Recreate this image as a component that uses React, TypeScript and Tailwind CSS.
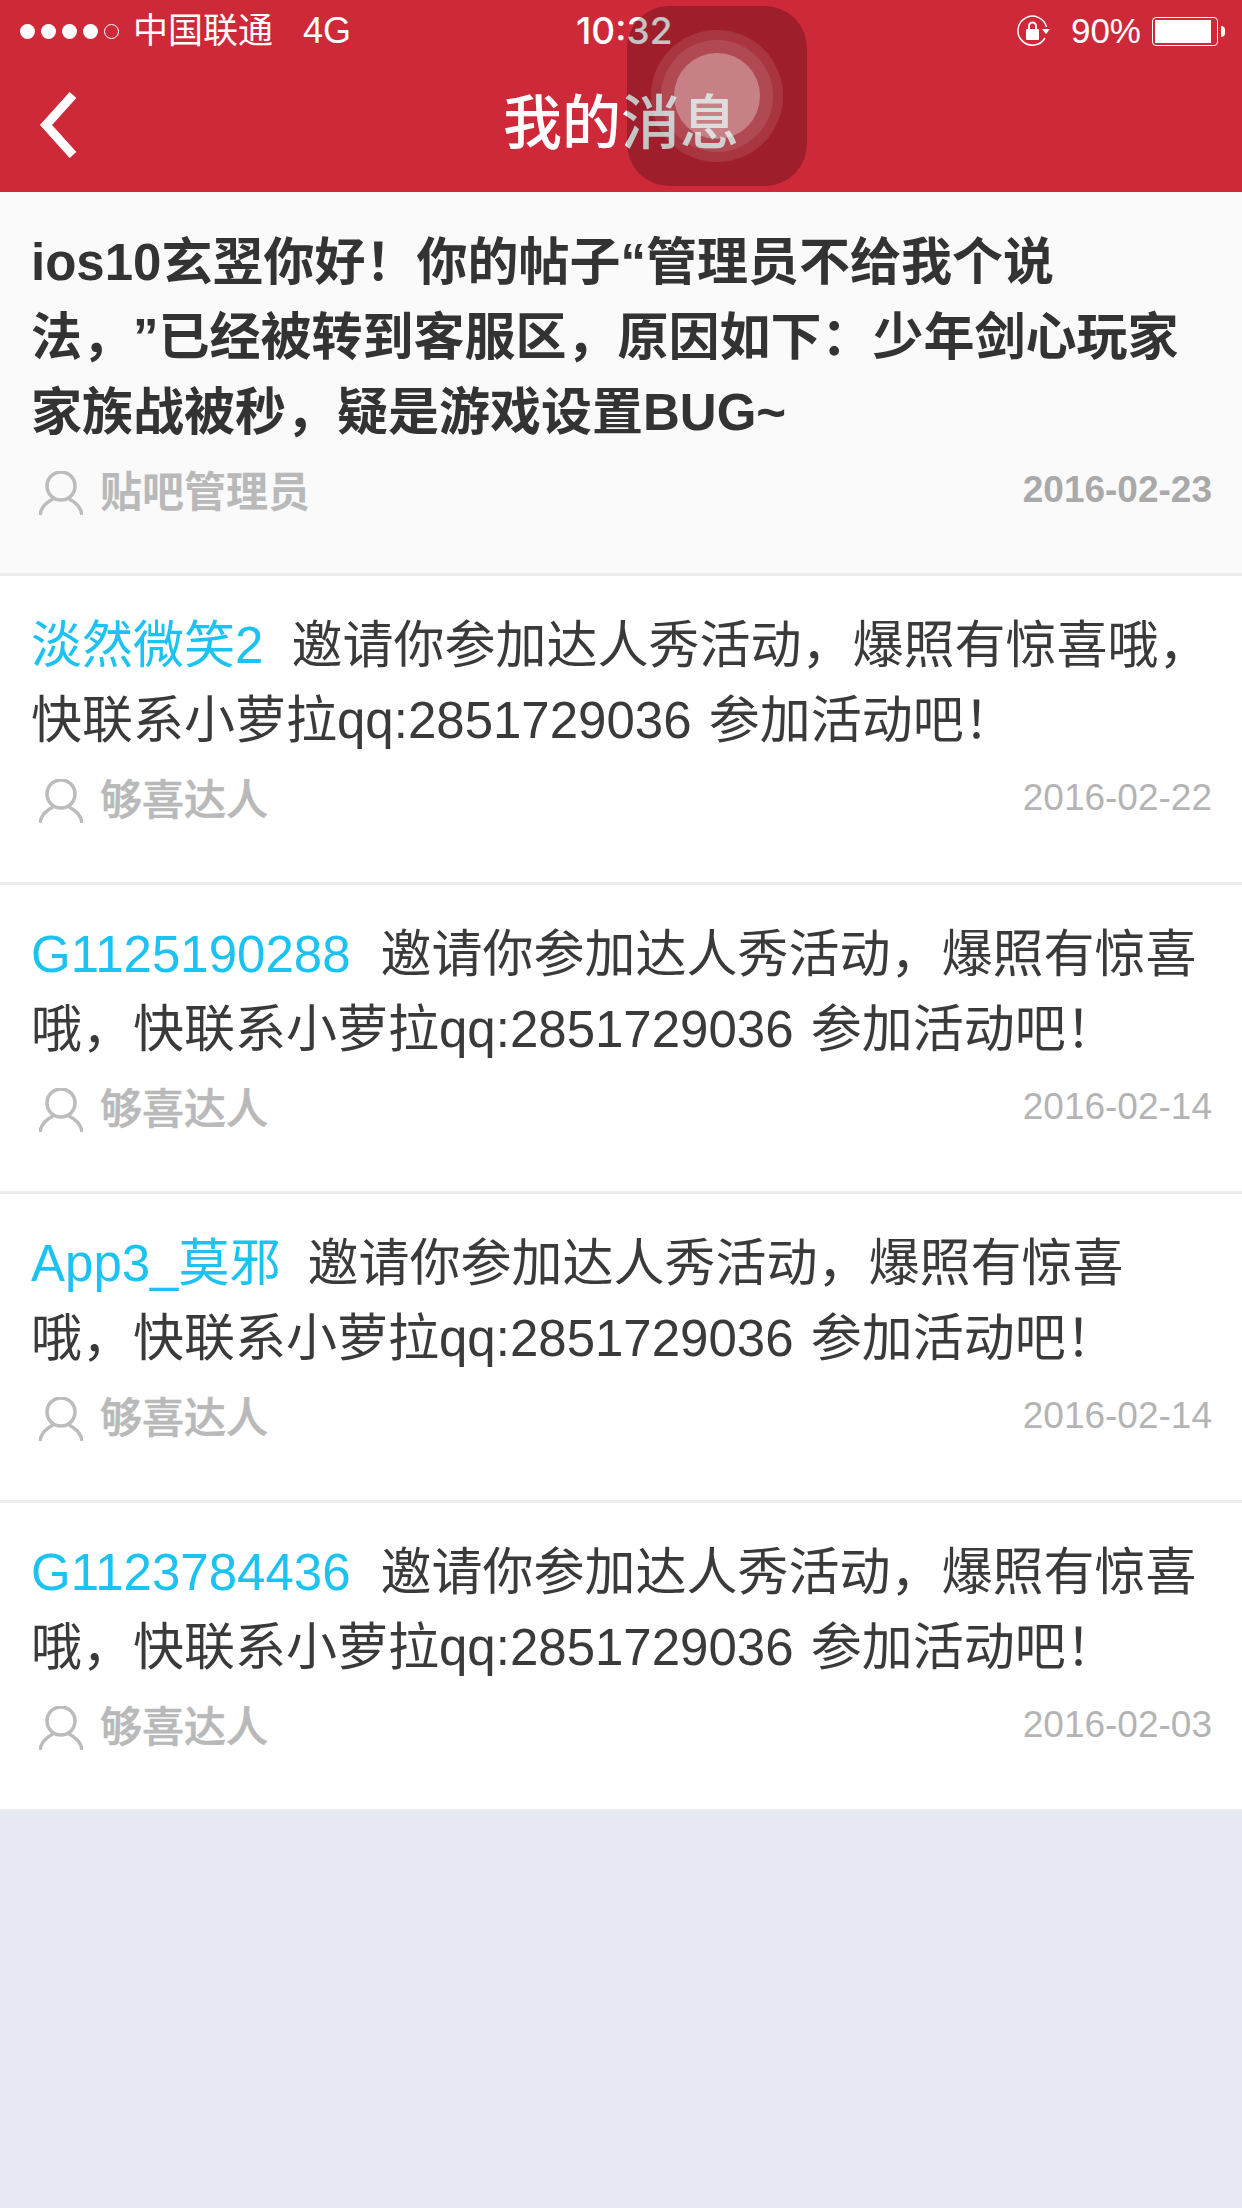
const font = "font-['Liberation_Sans','Noto_Sans_CJK_SC',sans-serif]";

const invite = "邀请你参加达人秀活动，爆照有惊喜";

const messages = [
  { name: "淡然微笑2", gap: "ml-[28px]", first: "邀请你参加达人秀活动，爆照有惊喜哦，", second: "快联系小萝拉qq:2851729036 参加活动吧！", date: "2016-02-22" },
  { name: "G1125190288", gap: "ml-[30px]", first: invite, second: "哦，快联系小萝拉qq:2851729036 参加活动吧！", date: "2016-02-14" },
  { name: "App3_莫邪", gap: "ml-[27px]", first: invite, second: "哦，快联系小萝拉qq:2851729036 参加活动吧！", date: "2016-02-14" },
  { name: "G1123784436", gap: "ml-[30px]", first: invite, second: "哦，快联系小萝拉qq:2851729036 参加活动吧！", date: "2016-02-03" },
];

function UserIcon() {
  return (
    <svg width="44" height="44" viewBox="0 0 44 44" fill="none" stroke="#bcbcbc" strokeWidth="3.500" className="shrink-0">
      <ellipse cx="22" cy="15" rx="14" ry="14" />
      <path d="M1 44c1-8 7-13 13-16M43 44c-1-8-7-13-13-16" />
    </svg>
  );
}

function Meta({ sender, date, bold }: { sender: string; date: string; bold?: boolean }) {
  return (
    <div className="flex items-start justify-between mt-[19px] pl-[8px] pr-[30px]">
      <div className="flex items-center gap-[17px] h-[48px]">
        <UserIcon />
        <span className={`text-[42px] leading-[48px] text-[#b9b9b9] ${bold ? "font-bold" : "font-medium [-webkit-text-stroke:0.6px_#b9b9b9]"}`}>{sender}</span>
      </div>
      <span className={`text-[37px] leading-[42px] ${bold ? "font-bold text-[#a9a9a9]" : "text-[#b4b4b4]"}`}>{date}</span>
    </div>
  );
}

function StatusBar() {
  return (
    <div className="relative flex items-center justify-between h-[62px] pl-[20px] pr-[17px] text-white">
      <div className="flex items-center">
        <div className="flex items-center gap-[6px]">
          <span className="w-[15px] h-[15px] rounded-full bg-white" />
          <span className="w-[15px] h-[15px] rounded-full bg-white" />
          <span className="w-[15px] h-[15px] rounded-full bg-white" />
          <span className="w-[15px] h-[15px] rounded-full bg-white" />
          <span className="w-[15px] h-[15px] rounded-full border border-white" />
        </div>
        <span className="ml-[14px] text-[35px] leading-[40px]">中国联通</span>
        <span className="ml-[30px] text-[36px] leading-[40px]">4G</span>
      </div>
      <span className="absolute left-[576px] top-[11px] font-['Inter'] text-[37px] leading-[40px] font-medium">10:32</span>
      <div className="flex items-center">
        <svg width="34" height="32" viewBox="0 0 34 32" fill="none" className="mr-[20px]">
          <path d="M28 23A14.500 14.500 0 1 1 29.500 12" stroke="#fff" strokeWidth="1.500" />
          <path d="M25 14h8l-4 5z" fill="#fff" />
          <rect x="9" y="14" width="13" height="11" rx="1" fill="#fff" />
          <path d="M12 14v-3a3.500 3.500 0 0 1 7 0v3" stroke="#fff" strokeWidth="2" />
        </svg>
        <span className="text-[35px] leading-[40px]">90%</span>
        <div className="ml-[11px] w-[66px] h-[29px] rounded-[4px] border border-white p-[2px]">
          <div className="h-full w-[56px] bg-white" />
        </div>
        <span className="ml-[3px] w-[4px] h-[11px] rounded-r-full bg-white" />
      </div>
    </div>
  );
}

function AssistiveTouch() {
  return (
    <div className="absolute left-[627px] top-[6px] w-[180px] h-[180px] rounded-[42px] bg-black/[0.23] flex items-center justify-center">
      <div className="w-[132px] h-[132px] rounded-full bg-white/10 flex items-center justify-center">
        <div className="w-[112px] h-[112px] rounded-full bg-white/10 flex items-center justify-center">
          <div className="w-[86px] h-[86px] rounded-full bg-white/30" />
        </div>
      </div>
    </div>
  );
}

export default function App() {
  return (
    <div className={`relative w-[1242px] h-[2208px] overflow-hidden bg-[#e6e8f2] [text-spacing-trim:space-all] ${font}`}>
      <header className="h-[192px] bg-[#ce2939]">
        <StatusBar />
        <div className="relative flex items-center justify-center h-[124px]">
          <svg width="44" height="66" viewBox="0 0 44 66" fill="none" stroke="#fff" strokeWidth="9" className="absolute left-[37px] top-[30px]">
            <path d="M36 3 9 33l27 30" />
          </svg>
          <span className="text-[59px] leading-[64px] font-medium text-white">我的消息</span>
        </div>
      </header>
      <AssistiveTouch />

      <section className="h-[384px] bg-[#fafafa] border-b-[3px] border-[#ececec] pt-[33px] pl-[31px]">
        <div className="text-[51px] leading-[75px] font-bold text-[#333] whitespace-nowrap">
          <div>ios10玄翌你好！你的帖子“管理员不给我个说</div>
          <div>法，”已经被转到客服区，原因如下：少年剑心玩家</div>
          <div>家族战被秒，疑是游戏设置BUG~</div>
        </div>
        <Meta sender="贴吧管理员" date="2016-02-23" bold />
      </section>

      {messages.map((m) => (
        <section key={m.name} className="h-[309px] bg-white border-b-[3px] border-[#ececec] pt-[32px] pl-[31px]">
          <div className="text-[51px] leading-[75px] text-[#3a3a3a] whitespace-nowrap [word-spacing:3px]">
            <div>
              <span className="text-[#1cc3f2]">{m.name}</span>
              <span className={m.gap}>{m.first}</span>
            </div>
            <div>{m.second}</div>
          </div>
          <Meta sender="够喜达人" date={m.date} />
        </section>
      ))}
    </div>
  );
}
